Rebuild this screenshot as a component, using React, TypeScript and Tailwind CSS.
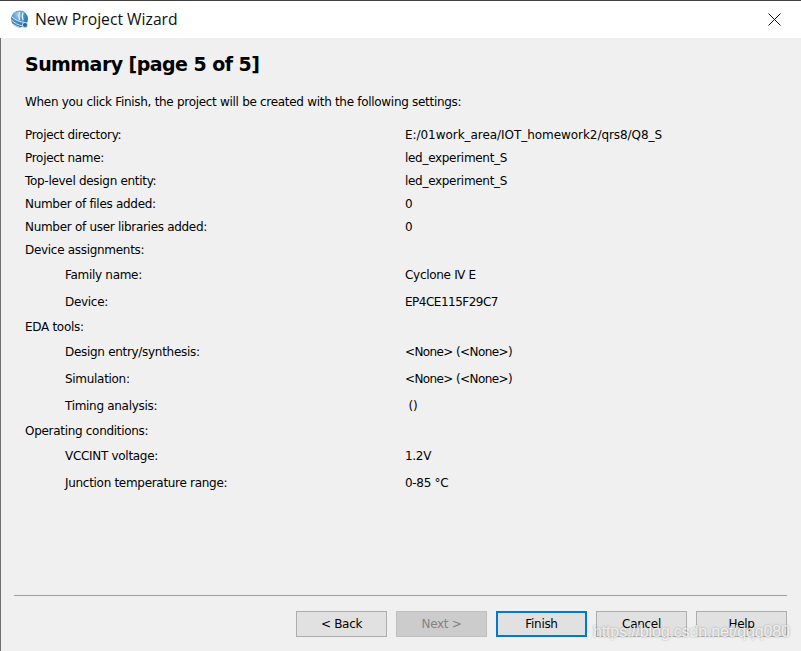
const font = "font-['DejaVu_Sans',sans-serif]";

type Row = { label: string; value?: string; sub?: boolean; valueClass?: string };

const rows: Row[] = [
  { label: "Project directory:", value: "E:/01work_area/IOT_homework2/qrs8/Q8_S", valueClass: "tracking-[-0.05px]" },
  { label: "Project name:", value: "led_experiment_S" },
  { label: "Top-level design entity:", value: "led_experiment_S" },
  { label: "Number of files added:", value: "0" },
  { label: "Number of user libraries added:", value: "0" },
  { label: "Device assignments:" },
  { label: "Family name:", value: "Cyclone Ⅳ E", sub: true },
  { label: "Device:", value: "EP4CE115F29C7", sub: true, valueClass: "tracking-[-0.5px]" },
  { label: "EDA tools:" },
  { label: "Design entry/synthesis:", value: "<None> (<None>)", sub: true, valueClass: "tracking-[-0.6px]" },
  { label: "Simulation:", value: "<None> (<None>)", sub: true, valueClass: "tracking-[-0.6px]" },
  { label: "Timing analysis:", value: "\u00a0()", sub: true },
  { label: "Operating conditions:" },
  { label: "VCCINT voltage:", value: "1.2V", sub: true },
  { label: "Junction temperature range:", value: "0-85 °C", sub: true },
];

function WizardIcon() {
  return (
    <svg width="20" height="20" viewBox="0 0 20 20" className="shrink-0">
      <defs>
        <radialGradient id="globe" cx="0.4" cy="0.25" r="0.85">
          <stop offset="0" stopColor="#a9cde8" />
          <stop offset="0.5" stopColor="#3d8ac4" />
          <stop offset="1" stopColor="#1f6299" />
        </radialGradient>
      </defs>
      <circle cx="9.5" cy="9" r="8.5" fill="url(#globe)" />
      <path d="M1.5 6.5c3.5 3.5 8 5.5 14 6M1.5 10c3 3 6.500 5 11 6M3 14c2 1.500 4 2.500 6 3" stroke="#dcebf6" strokeWidth="1" fill="none" />
      <path d="M9.500 2c-1 3-1 5.500 0 8M13 2.500c-1 2.500-1 5 0 8" stroke="#e8f2f9" strokeWidth="1.300" fill="none" />
      <circle cx="15" cy="15" r="2.600" fill="#1c6ba8" stroke="#d5dde3" strokeWidth="1" />
    </svg>
  );
}

function Btn({ label, kind }: { label: string; kind?: "off" | "main" }) {
  if (kind === "off")
    return (
      <div className="w-[91px] h-[26px] flex items-center justify-center bg-[#cccccc] border border-[#bfbfbf] text-[#838383]">
        {label}
      </div>
    );
  if (kind === "main")
    return (
      <div className="w-[91px] h-[26px] flex items-center justify-center bg-[#e1e1e1] border-2 border-[#0078d7] text-black">
        {label}
      </div>
    );
  return (
    <div className="w-[91px] h-[26px] flex items-center justify-center bg-[#e1e1e1] border border-[#adadad] text-black">
      {label}
    </div>
  );
}

export default function App() {
  return (
    <div className={`relative w-[801px] h-[651px] flex flex-col bg-[#f0f0f0] overflow-hidden text-black text-[12px] tracking-[-0.3px] ${font}`}>
      <div className="h-px bg-[#404040]" />
      <div className="h-[37px] bg-white flex items-center pl-[10px] pr-[20px]">
        <WizardIcon />
        <div className="ml-[5px] text-[15.7px] tracking-normal font-['Open_Sans',sans-serif] text-[#111111]">New Project Wizard</div>
        <svg width="13" height="13" viewBox="0 0 13 13" className="ml-auto">
          <path d="M0.5 0.5l12 12M12.5 0.5l-12 12" stroke="#111" strokeWidth="1" />
        </svg>
      </div>

      <div className="flex-1 flex flex-col border-l border-[#707070] pl-[24px]">
        <h1 className="mt-[12px] text-[19px] leading-[28px] font-bold tracking-[-0.55px]">Summary [page 5 of 5]</h1>
        <p className="mt-[16px] leading-[16px]">When you click Finish, the project will be created with the following settings:</p>
        <div className="mt-[13px] flex flex-col">
          {rows.map((r) => (
            <div key={r.label} className={r.sub ? "flex items-center h-[27px]" : "flex items-center h-[23px]"}>
              <div className={r.sub ? "w-[380px] pl-[40px]" : "w-[380px]"}>{r.label}</div>
              <div className={`whitespace-pre ${r.valueClass ?? ""}`}>{r.value}</div>
            </div>
          ))}
        </div>

        <div className="mt-auto mr-[14px] ml-[-11px] h-px bg-[#a0a0a0]" />
        <div className="mt-[15px] mb-[14px] flex justify-end gap-[9px] pr-[14px]">
          <Btn label="< Back" />
          <Btn label="Next >" kind="off" />
          <Btn label="Finish" kind="main" />
          <Btn label="Cancel" />
          <Btn label="Help" />
        </div>
      </div>

      <div className="absolute left-[593px] top-[620px] text-[16px] leading-[24px] tracking-[-0.15px] font-['Liberation_Sans',sans-serif] text-white/80 [text-shadow:0_0_2px_rgba(90,90,90,0.6)] whitespace-nowrap">
        https://blog.csdn.net/qqq080
      </div>
    </div>
  );
}
